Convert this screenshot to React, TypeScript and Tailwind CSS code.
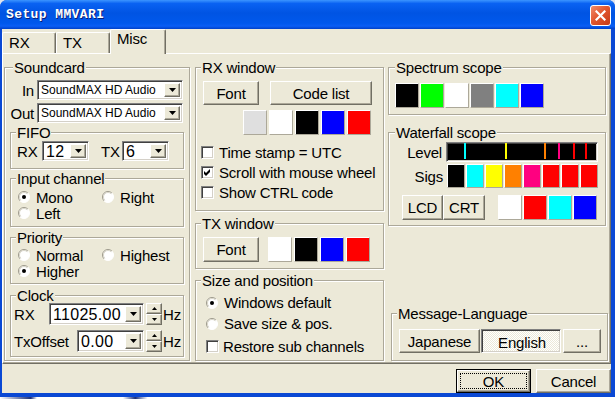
import React from "react";

const RAISED =
  "bg-[#ece9d8] border border-t-white border-l-white border-r-[#716f64] border-b-[#716f64] shadow-[inset_-1px_-1px_0_#aca899]";
const SUNKEN =
  "border border-t-[#808080] border-l-[#808080] border-r-white border-b-white shadow-[inset_1px_1px_0_#404040,inset_-1px_-1px_0_#d4d0c8]";

interface GroupProps {
  label: string;
  labelClass?: string;
  className?: string;
  children?: React.ReactNode;
}

const Group: React.FC<GroupProps> = ({ label, labelClass = "left-[5px]", className = "", children }) => (
  <div className={`relative shrink-0 border border-[#aca899] shadow-[inset_1px_1px_0_#fff,1px_1px_0_#fff] ${className}`}>
    <span className={`absolute -top-[8px] ${labelClass} bg-[#ece9d8] px-px leading-[15px] whitespace-nowrap`}>
      {label}
    </span>
    {children}
  </div>
);

const DropBtn = () => (
  <div className={`${RAISED} w-[16px] shrink-0 self-stretch my-[2px] mr-[2px] flex items-center justify-center`}>
    <svg width="7" height="4" viewBox="0 0 7 4">
      <path d="M0 0 H7 L3.5 4 Z" fill="#000" />
    </svg>
  </div>
);

const Combo: React.FC<{ value: string; className?: string; textClass?: string }> = ({
  value,
  className = "",
  textClass = "text-[16px] tracking-[0.3px]",
}) => (
  <div className={`flex items-center shrink-0 bg-white ${SUNKEN} ${className}`}>
    <span className={`flex-1 pl-[3px] whitespace-nowrap overflow-hidden ${textClass}`}>{value}</span>
    <DropBtn />
  </div>
);

const Spin = () => (
  <div className="flex flex-col ml-[2px] w-[16px] h-[22px] shrink-0">
    <div className={`${RAISED} flex-1 flex items-center justify-center`}>
      <svg width="5" height="3" viewBox="0 0 5 3">
        <path d="M2.5 0 L5 3 H0 Z" fill="#000" />
      </svg>
    </div>
    <div className={`${RAISED} flex-1 flex items-center justify-center`}>
      <svg width="5" height="3" viewBox="0 0 5 3">
        <path d="M0 0 H5 L2.5 3 Z" fill="#000" />
      </svg>
    </div>
  </div>
);

const Radio: React.FC<{ label: string; checked?: boolean; className?: string }> = ({ label, checked, className = "" }) => (
  <div className={`flex items-center h-[16px] ${className}`}>
    <svg width="12" height="12" viewBox="0 0 12 12" className="shrink-0">
      <circle cx="6" cy="6" r="5.5" fill="#fff" />
      <path d="M2.1 9.9 A5.5 5.5 0 0 1 9.9 2.1" fill="none" stroke="#9d9a8c" />
      <path d="M2.8 9.2 A4.5 4.5 0 0 1 9.2 2.8" fill="none" stroke="#d8d5c8" />
      <path d="M9.9 2.1 A5.5 5.5 0 0 1 2.1 9.9" fill="none" stroke="#ffffff" />
      {checked && <circle cx="6" cy="6" r="2" fill="#000" />}
    </svg>
    <span className="ml-[6px] whitespace-nowrap">{label}</span>
  </div>
);

const Check: React.FC<{ label: string; checked?: boolean; className?: string; gap?: string }> = ({
  label,
  checked,
  className = "",
  gap = "ml-[5px]",
}) => (
  <div className={`flex items-center h-[20px] ${className}`}>
    <div className={`w-[13px] h-[13px] shrink-0 bg-white ${SUNKEN} flex items-center justify-center`}>
      {checked && (
        <svg width="7" height="7" viewBox="0 0 7 7">
          <path d="M0 2 L2 4 L6 0 L6 3 L2 7 L0 5 Z" fill="#000" />
        </svg>
      )}
    </div>
    <span className={`${gap} whitespace-nowrap`}>{label}</span>
  </div>
);

const Btn: React.FC<{ className?: string; children: React.ReactNode }> = ({ className = "", children }) => (
  <div className={`${RAISED} shrink-0 flex items-center justify-center ${className}`}>{children}</div>
);

const Swatch: React.FC<{ color: string; className?: string }> = ({ color, className = "w-[24px] h-[25px]" }) => (
  <div className={`shrink-0 border border-t-white border-l-white border-r-[#aca899] border-b-[#aca899] ${color} ${className}`} />
);

const Tab: React.FC<{ label: string; active?: boolean }> = ({ label, active }) =>
  active ? (
    <div className="relative z-10 w-[56px] h-[25px] -mb-px pl-[6px] pt-[1px] rounded-t-[2px] bg-[#ece9d8] border border-b-0 border-t-white border-l-white border-r-[#716f64] shadow-[inset_-1px_0_0_#aca899]">
      {label}
    </div>
  ) : (
    <div className="w-[54px] h-[21px] pl-[6px] pt-[2px] rounded-t-[2px] bg-[#ece9d8] border border-b-0 border-t-white border-l-white border-r-[#716f64] shadow-[inset_-1px_0_0_#aca899]">
      {label}
    </div>
  );

export default function App() {
  return (
    <div className="w-[615px] h-[399px] overflow-hidden bg-[#dfe4ee] font-['Liberation_Sans',Arial,sans-serif] text-[15px] tracking-[-0.2px] leading-[15px] text-black">
      <div className="flex flex-col w-[615px] h-[397px] bg-[#0a48d4] rounded-t-[7px]">
        {/* Title bar */}
        <div className="flex items-start h-[29px] shrink-0 rounded-t-[7px] bg-[linear-gradient(180deg,#3c95ff_0%,#0a62f2_12%,#0054e3_45%,#0058ec_80%,#0a5ef5_90%,#0040c8_100%)]">
          <span className="ml-[6px] mt-[8px] font-['Liberation_Mono',monospace] font-bold text-[13px] tracking-[0.4px] leading-[13px] text-white [text-shadow:1px_1px_0_#0a1e78]">
            Setup MMVARI
          </span>
          <div className="ml-auto mr-[4px] mt-[5px] w-[21px] h-[21px] rounded-[3px] border border-white bg-[linear-gradient(135deg,#f08c6c_0%,#e2572f_45%,#c73a16_100%)] flex items-center justify-center">
            <svg width="11" height="11" viewBox="0 0 11 11">
              <path d="M1.5 1.5 L9.5 9.5 M9.5 1.5 L1.5 9.5" stroke="#fff" strokeWidth="2.2" strokeLinecap="square" />
            </svg>
          </div>
        </div>

        {/* Dialog body */}
        <div className="flex flex-col ml-[2px] mr-[4px] h-[364px] bg-[#ece9d8]">
          {/* Tabs */}
          <div className="flex items-end h-[24px] shrink-0">
            <Tab label="RX" />
            <Tab label="TX" />
            <Tab label="Misc" active />
          </div>

          {/* Tab page */}
          <div className="flex h-[311px] shrink-0 pl-px pt-[13px] border border-t-white border-l-white border-r-[#716f64] border-b-[#716f64] shadow-[inset_-1px_-1px_0_#aca899]">
            {/* Left column */}
            <Group label="Soundcard" labelClass="left-[8px]" className="w-[186px] h-[294px]">
              <div className="flex flex-col pt-[12px]">
                <div className="flex items-center h-[20px]">
                  <span className="w-[31px] pr-[2px] text-right">In</span>
                  <Combo value="SoundMAX HD Audio" className="ml-px w-[146px] h-[20px]" textClass="text-[12px] tracking-[0px]" />
                </div>
                <div className="flex items-center h-[20px] mt-[3px]">
                  <span className="w-[31px] pr-[2px] text-right">Out</span>
                  <Combo value="SoundMAX HD Audio" className="ml-px w-[146px] h-[20px]" textClass="text-[12px] tracking-[0px]" />
                </div>

                <Group label="FIFO" className="ml-[5px] mt-[9px] w-[174px] h-[37px]">
                  <div className="flex items-center pt-[8px]">
                    <span className="ml-[6px] w-[20px]">RX</span>
                    <Combo value="12" className="ml-[5px] w-[47px] h-[20px]" />
                    <span className="ml-[12px] w-[21px]">TX</span>
                    <Combo value="6" className="w-[47px] h-[20px]" />
                  </div>
                </Group>

                <Group label="Input channel" className="ml-[5px] mt-[9px] w-[174px] h-[49px]">
                  <div className="grid grid-cols-[84px_1fr] pl-[7px] pt-[10px]">
                    <Radio label="Mono" checked />
                    <Radio label="Right" />
                    <Radio label="Left" />
                  </div>
                </Group>

                <Group label="Priority" className="ml-[5px] mt-[10px] w-[174px] h-[47px]">
                  <div className="grid grid-cols-[84px_1fr] pl-[7px] pt-[9px]">
                    <Radio label="Normal" />
                    <Radio label="Highest" />
                    <Radio label="Higher" checked />
                  </div>
                </Group>

                <Group label="Clock" className="ml-[5px] mt-[11px] w-[174px] h-[62px]">
                  <div className="flex flex-col pt-[7px]">
                    <div className="flex items-center h-[22px]">
                      <span className="ml-[3px] w-[35px]">RX</span>
                      <Combo value="11025.00" className="w-[95px] h-[22px]" />
                      <Spin />
                      <span className="ml-px">Hz</span>
                    </div>
                    <div className="flex items-center h-[22px] mt-[5px]">
                      <span className="ml-[3px] w-[63px]">TxOffset</span>
                      <Combo value="0.00" className="w-[67px] h-[22px]" />
                      <Spin />
                      <span className="ml-px">Hz</span>
                    </div>
                  </div>
                </Group>
              </div>
            </Group>

            {/* Middle column */}
            <div className="flex flex-col ml-[5px] w-[189px] shrink-0">
              <Group label="RX window" labelClass="left-[5px]" className="w-[189px] h-[144px]">
                <div className="flex flex-col pt-[13px]">
                  <div className="flex h-[24px]">
                    <Btn className="ml-[7px] w-[56px] h-[24px]">Font</Btn>
                    <Btn className="ml-[11px] w-[102px] h-[24px]">Code list</Btn>
                  </div>
                  <div className="flex gap-[2px] ml-[47px] mt-[5px]">
                    <Swatch color="bg-[#dfdfdf]" />
                    <Swatch color="bg-white" />
                    <Swatch color="bg-black" />
                    <Swatch color="bg-[#0000ff]" />
                    <Swatch color="bg-[#ff0000]" />
                  </div>
                  <div className="flex flex-col mt-[7px] ml-[5px]">
                    <Check label="Time stamp = UTC" />
                    <Check label="Scroll with mouse wheel" checked />
                    <Check label="Show CTRL code" />
                  </div>
                </div>
              </Group>

              <Group label="TX window" labelClass="left-[5px]" className="mt-[12px] w-[189px] h-[46px]">
                <div className="flex pt-[13px]">
                  <Btn className="ml-[7px] w-[56px] h-[25px]">Font</Btn>
                  <div className="flex gap-[2px] ml-[9px]">
                    <Swatch color="bg-white" />
                    <Swatch color="bg-black" />
                    <Swatch color="bg-[#0000ff]" />
                    <Swatch color="bg-[#ff0000]" />
                  </div>
                </div>
              </Group>

              <Group label="Size and position" labelClass="left-[5px]" className="mt-[11px] w-[189px] h-[81px]">
                <div className="flex flex-col pt-[11px] pl-[10px]">
                  <Radio label="Windows default" checked className="h-[21px]" />
                  <Radio label="Save size & pos." className="h-[21px]" />
                  <Check label="Restore sub channels" className="mt-[2px]" gap="ml-[4px]" />
                </div>
              </Group>
            </div>

            {/* Right column */}
            <div className="flex flex-col ml-[4px] w-[218px] shrink-0">
              <Group label="Spectrum scope" labelClass="left-[6px]" className="w-[218px] h-[48px]">
                <div className="flex gap-px ml-[6px] mt-[15px]">
                  <Swatch color="bg-black" />
                  <Swatch color="bg-[#00ff00]" />
                  <Swatch color="bg-white" />
                  <Swatch color="bg-[#808080]" />
                  <Swatch color="bg-[#00ffff]" />
                  <Swatch color="bg-[#0000ff]" />
                </div>
              </Group>

              <Group label="Waterfall scope" labelClass="left-[6px]" className="mt-[17px] w-[218px] h-[94px]">
                <div className="flex flex-col pt-[9px]">
                  <div className="flex items-center h-[20px]">
                    <span className="w-[57px] pr-[4px] text-right">Level</span>
                    <div className={`w-[152px] h-[20px] bg-black ${SUNKEN}`}>
                      <svg width="148" height="16" viewBox="0 0 148 16" className="block">
                        <rect x="17" y="0" width="2" height="16" fill="#00ffff" />
                        <rect x="58" y="0" width="2" height="16" fill="#ffff00" />
                        <rect x="97" y="0" width="2" height="16" fill="#ff8000" />
                        <rect x="111" y="0" width="2" height="16" fill="#ff0080" />
                        <rect x="126" y="0" width="2" height="16" fill="#ff0000" />
                        <rect x="138" y="0" width="2" height="16" fill="#ff0000" />
                      </svg>
                    </div>
                  </div>
                  <div className="flex items-center h-[24px] mt-[2px]">
                    <span className="w-[58px] pr-[4px] text-right">Sigs</span>
                    <div className="flex gap-px">
                      <Swatch color="bg-black" className="w-[18px] h-[24px]" />
                      <Swatch color="bg-[#00ffff]" className="w-[18px] h-[24px]" />
                      <Swatch color="bg-[#ffff00]" className="w-[18px] h-[24px]" />
                      <Swatch color="bg-[#ff8000]" className="w-[18px] h-[24px]" />
                      <Swatch color="bg-[#ff0080]" className="w-[18px] h-[24px]" />
                      <Swatch color="bg-[#ff0000]" className="w-[18px] h-[24px]" />
                      <Swatch color="bg-[#ff0000]" className="w-[18px] h-[24px]" />
                      <Swatch color="bg-[#ff0000]" className="w-[18px] h-[24px]" />
                    </div>
                  </div>
                  <div className="flex h-[25px] mt-[7px]">
                    <Btn className="ml-[13px] w-[41px] h-[25px]">LCD</Btn>
                    <Btn className="w-[42px] h-[25px]">CRT</Btn>
                    <div className="flex gap-px ml-[13px]">
                      <Swatch color="bg-white" />
                      <Swatch color="bg-[#ff0000]" />
                      <Swatch color="bg-[#00ffff]" />
                      <Swatch color="bg-[#0000ff]" />
                    </div>
                  </div>
                </div>
              </Group>

              <Group label="Message-Language" labelClass="left-[5px]" className="ml-[3px] mt-[87px] w-[217px] h-[48px]">
                <div className="flex pt-[15px]">
                  <Btn className="ml-[7px] w-[81px] h-[24px]">Japanese</Btn>
                  <div className={`ml-px w-[80px] h-[24px] shrink-0 flex items-center justify-center pt-[2px] pl-[2px] ${SUNKEN} bg-[repeating-conic-gradient(#ffffff_0%_25%,#ece9d8_0%_50%)] bg-[length:2px_2px]`}>
                    English
                  </div>
                  <Btn className="ml-[2px] w-[38px] h-[24px]">...</Btn>
                </div>
              </Group>
            </div>
          </div>

          {/* OK / Cancel */}
          <div className="flex justify-end gap-[5px] mt-[5px] h-[24px] shrink-0">
            <div className="w-[75px] h-[24px] border border-black p-0">
              <div className={`${RAISED} w-full h-full p-[2px]`}>
                <div className="w-full h-full border border-dotted border-black flex items-center justify-center">OK</div>
              </div>
            </div>
            <Btn className="w-[75px] h-[24px]">Cancel</Btn>
          </div>
        </div>
      </div>
      <div className="h-[2px] bg-[linear-gradient(90deg,#ffffff_0%,#1b2f7a_5%,#ffffff_6%,#ffffff_20%,#1b2f7a_22%,#ffffff_24%)]" />
    </div>
  );
}
